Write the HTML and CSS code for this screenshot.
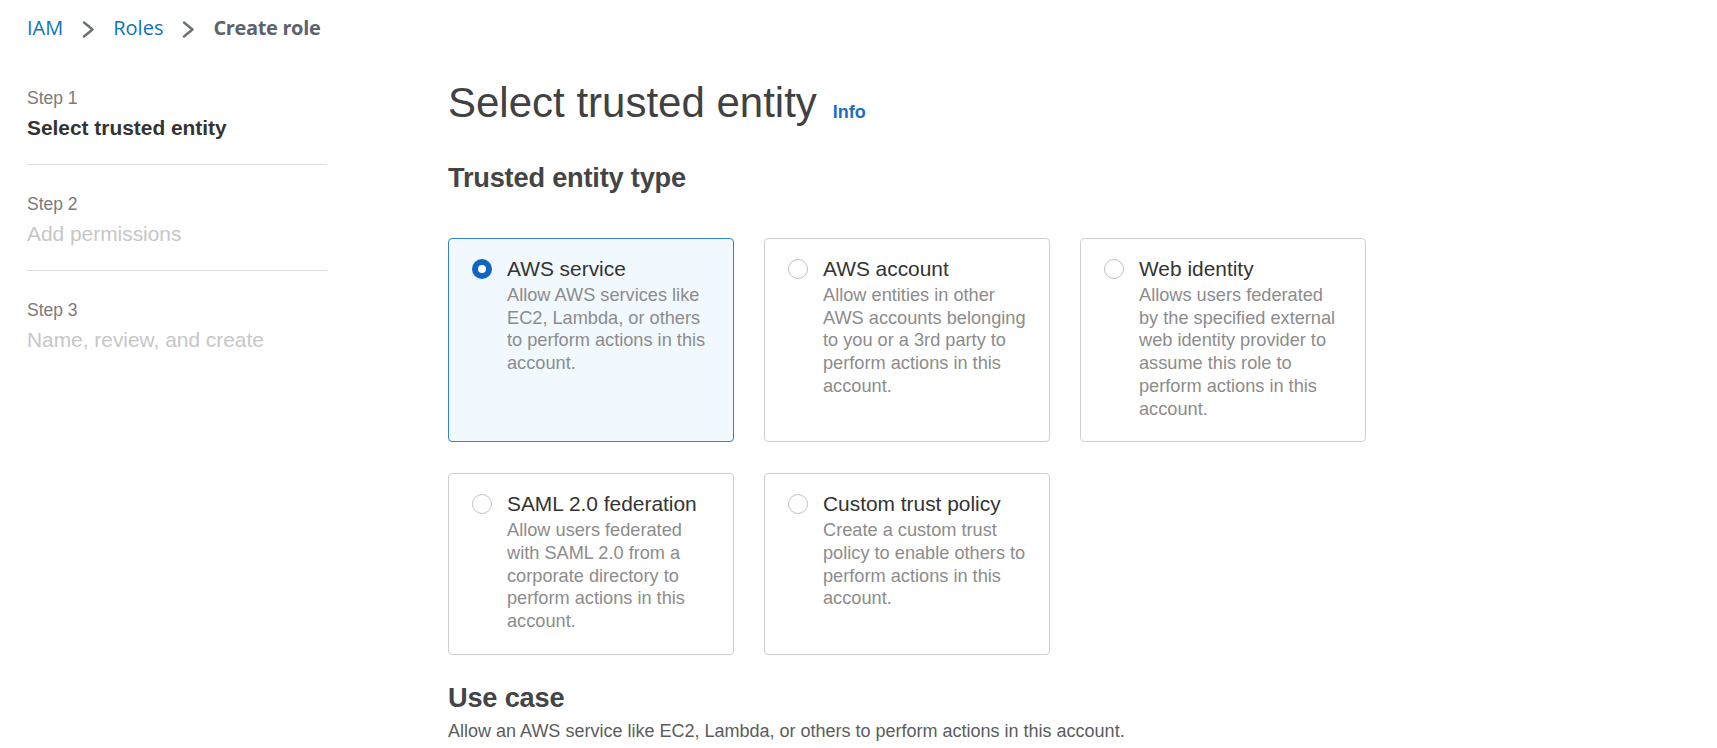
FILE: index.html
```html
<!DOCTYPE html>
<html lang="en">
<head>
<meta charset="utf-8">
<title>Create role</title>
<link rel="stylesheet" href="styles.css">
</head>
<body>
<nav class="crumbs">
  <a class="crumb-link" href="#">IAM</a>
  <span class="crumb-sep"><svg width="13" height="17" viewBox="0 0 13 17"><path d="M2 1.5 L10.5 8.5 L2 15.5" fill="none" stroke="#687078" stroke-width="2.4" stroke-linecap="round" stroke-linejoin="round"/></svg></span>
  <a class="crumb-link" href="#">Roles</a>
  <span class="crumb-sep"><svg width="13" height="17" viewBox="0 0 13 17"><path d="M2 1.5 L10.5 8.5 L2 15.5" fill="none" stroke="#687078" stroke-width="2.4" stroke-linecap="round" stroke-linejoin="round"/></svg></span>
  <span class="crumb-current">Create role</span>
</nav>

<div class="layout">
  <aside class="steps">
    <div class="step">
      <div class="step-label">Step 1</div>
      <div class="step-name step-active">Select trusted entity</div>
    </div>
    <div class="step">
      <div class="step-label">Step 2</div>
      <div class="step-name">Add permissions</div>
    </div>
    <div class="step step-last">
      <div class="step-label">Step 3</div>
      <div class="step-name">Name, review, and create</div>
    </div>
  </aside>

  <main class="main">
    <div class="title-row">
      <h1 class="title">Select trusted entity</h1>
      <a class="info" href="#">Info</a>
    </div>

    <h2 class="section-heading">Trusted entity type</h2>

    <div class="tiles">
      <div class="tile tile-selected">
        <span class="radio radio-on"></span>
        <div class="tile-body">
          <div class="tile-title">AWS service</div>
          <div class="tile-desc">Allow AWS services like EC2, Lambda, or others to perform actions in this account.</div>
        </div>
      </div>
      <div class="tile">
        <span class="radio"></span>
        <div class="tile-body">
          <div class="tile-title">AWS account</div>
          <div class="tile-desc">Allow entities in other AWS accounts belonging to you or a 3rd party to perform actions in this account.</div>
        </div>
      </div>
      <div class="tile">
        <span class="radio"></span>
        <div class="tile-body">
          <div class="tile-title">Web identity</div>
          <div class="tile-desc">Allows users federated by the specified external web identity provider to assume this role to perform actions in this account.</div>
        </div>
      </div>
      <div class="tile">
        <span class="radio"></span>
        <div class="tile-body">
          <div class="tile-title">SAML 2.0 federation</div>
          <div class="tile-desc">Allow users federated with SAML 2.0 from a corporate directory to perform actions in this account.</div>
        </div>
      </div>
      <div class="tile">
        <span class="radio"></span>
        <div class="tile-body">
          <div class="tile-title">Custom trust policy</div>
          <div class="tile-desc">Create a custom trust policy to enable others to perform actions in this account.</div>
        </div>
      </div>
    </div>

    <h2 class="section-heading use-case">Use case</h2>
    <p class="use-desc">Allow an AWS service like EC2, Lambda, or others to perform actions in this account.</p>
  </main>
</div>
</body>
</html>
```

FILE: styles.css
```css
* { box-sizing: border-box; }

html, body {
  margin: 0;
  padding: 0;
  background: #ffffff;
}

body {
  font-family: "Liberation Sans", Arial, sans-serif;
  color: #333333;
  overflow: hidden;
}

.crumbs {
  display: flex;
  align-items: center;
  padding: 14px 0 0 27px;
  height: 41px;
  font-family: "Open Sans", "Liberation Sans", sans-serif;
  font-size: 20px;
  line-height: 27px;
}

.crumb-link {
  color: #0f73b9;
  text-decoration: none;
}

.crumb-sep {
  width: 50px;
  display: flex;
  justify-content: center;
  margin-top: 3px;
}

.crumb-current {
  color: #5b636d;
  font-weight: 700;
  letter-spacing: -0.35px;
}

.layout {
  display: flex;
  margin-top: 37px;
  padding-left: 27px;
}

.steps {
  width: 300px;
  flex: none;
  padding-top: 8.7px;
}

.step {
  padding: 0 0 24px 0;
  border-bottom: 1px solid #dcdcdc;
  margin-bottom: 27.5px;
}

.step-last {
  border-bottom: none;
}

.step-label {
  font-size: 17.5px;
  line-height: 22.5px;
  color: #7b7b7b;
}

.step-name {
  margin-top: 6px;
  font-size: 20.9px;
  line-height: 25px;
  color: #c6c6c6;
}

.step-active {
  color: #333333;
  font-weight: 700;
}

.main {
  margin-left: 121px;
  flex: 1;
}

.title-row {
  display: flex;
  align-items: baseline;
  gap: 16px;
}

.title {
  margin: 0;
  font-size: 42px;
  line-height: 50px;
  font-weight: 400;
  color: #414141;
}

.info {
  font-size: 18px;
  font-weight: 700;
  color: #1a6fc4;
  text-decoration: none;
  position: relative;
  top: 1px;
}

.section-heading {
  margin: 32.5px 0 0 0;
  font-size: 27.2px;
  line-height: 34px;
  font-weight: 700;
  color: #444444;
  letter-spacing: -0.2px;
}

.tiles {
  margin-top: 43.5px;
  display: grid;
  grid-template-columns: repeat(3, 286px);
  column-gap: 30px;
  row-gap: 31px;
}

.tile {
  display: flex;
  align-items: flex-start;
  gap: 15px;
  padding: 17px 20px 21px 23px;
  border: 1px solid #cfcfcf;
  border-radius: 4px;
  background: #ffffff;
}

.tile-selected {
  border-color: #2f82d6;
  background: #f1f8fe;
}

.radio {
  flex: none;
  width: 20px;
  height: 20px;
  margin-top: 3px;
  border-radius: 50%;
  border: 1.5px solid #c0c0c0;
  background: #ffffff;
}

.radio-on {
  border: 6.5px solid #0f66c0;
}

.tile-body {
  flex: 1;
  min-width: 0;
}

.tile-title {
  font-size: 20.9px;
  line-height: 25px;
  color: #333333;
}

.tile-desc {
  margin-top: 3px;
  font-size: 18.2px;
  line-height: 22.7px;
  color: #8c8c8c;
}

.use-case {
  margin-top: 26.5px;
}

.use-desc {
  margin: 5px 0 0 0;
  font-size: 18px;
  line-height: 22.5px;
  color: #5c5c5c;
}
```
